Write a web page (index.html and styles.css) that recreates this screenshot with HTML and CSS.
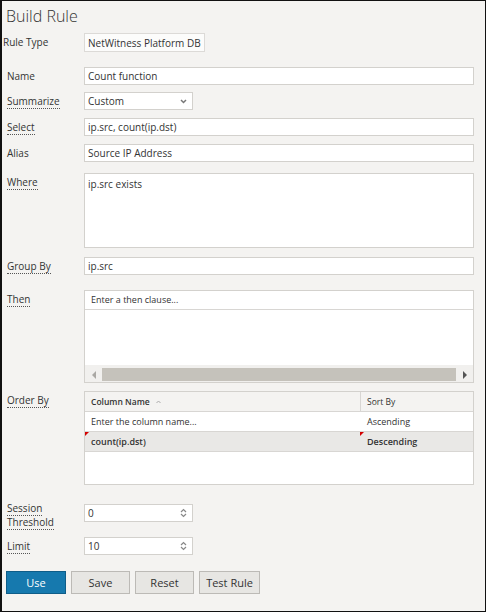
FILE: index.html
```html
<!DOCTYPE html>
<html lang="en">
<head>
  <meta charset="UTF-8">
  <title>Build Rule</title>
  <link rel="stylesheet" href="styles.css">
</head>
<body>
  <div class="panel">
    <h1 class="title">Build Rule</h1>

    <div class="row row-type">
      <span class="lbl lbl-type">Rule Type</span>
      <div class="field field-type">NetWitness Platform DB</div>
    </div>

    <div class="row gap-15">
      <span class="lbl">Name</span>
      <div class="field">Count function</div>
    </div>

    <div class="row gap-7">
      <span class="lbl"><span class="tip">Summarize</span></span>
      <div class="field field-short">
        <span>Custom</span>
        <svg class="chev" width="7" height="5" viewBox="0 0 7 5"><polyline points="1,1 3.5,3.5 6,1" fill="none" stroke="#777" stroke-width="1.5"/></svg>
      </div>
    </div>

    <div class="row">
      <span class="lbl"><span class="tip">Select</span></span>
      <div class="field">ip.src, count(ip.dst)</div>
    </div>

    <div class="row">
      <span class="lbl">Alias</span>
      <div class="field">Source IP Address</div>
    </div>

    <div class="row gap-11">
      <span class="lbl"><span class="tip">Where</span></span>
      <div class="field field-area">ip.src exists</div>
    </div>

    <div class="row gap-9">
      <span class="lbl"><span class="tip">Group By</span></span>
      <div class="field">ip.src</div>
    </div>

    <div class="row gap-15">
      <span class="lbl"><span class="tip">Then</span></span>
      <div class="then-box">
        <div class="then-head">Enter a then clause...</div>
        <div class="then-body"></div>
        <div class="hscroll">
          <div class="sbtn"><span class="arrow-left"></span></div>
          <div class="thumb"></div>
          <div class="sbtn"><span class="arrow-right"></span></div>
        </div>
      </div>
    </div>

    <div class="row">
      <span class="lbl"><span class="tip">Order By</span></span>
      <div class="grid">
        <div class="grid-head">
          <div class="gcol1 head-name">Column Name
            <svg class="caret" width="5" height="4" viewBox="0 0 5 4"><polyline points="0.5,3 2.5,1 4.5,3" fill="none" stroke="#aaa" stroke-width="1"/></svg>
          </div>
          <div class="gcol2 head-sort">Sort By</div>
        </div>
        <div class="grid-row">
          <div class="gcol1">Enter the column name...</div>
          <div class="gcol2">Ascending</div>
        </div>
        <div class="grid-row selected">
          <div class="gcol1 dirty">count(ip.dst)</div>
          <div class="gcol2 dirty">Descending</div>
        </div>
        <div class="grid-empty"></div>
      </div>
    </div>

    <div class="row gap-19">
      <span class="lbl lbl-two"><span class="tip">Session</span><br><span class="tip">Threshold</span></span>
      <div class="field field-short">
        <span>0</span>
        <svg class="spin" width="7" height="10" viewBox="0 0 7 10"><polyline points="1,4 3.5,1.5 6,4" fill="none" stroke="#888" stroke-width="1.2"/><polyline points="1,6 3.5,8.5 6,6" fill="none" stroke="#888" stroke-width="1.2"/></svg>
      </div>
    </div>

    <div class="row">
      <span class="lbl"><span class="tip">Limit</span></span>
      <div class="field field-short">
        <span>10</span>
        <svg class="spin" width="7" height="10" viewBox="0 0 7 10"><polyline points="1,4 3.5,1.5 6,4" fill="none" stroke="#888" stroke-width="1.2"/><polyline points="1,6 3.5,8.5 6,6" fill="none" stroke="#888" stroke-width="1.2"/></svg>
      </div>
    </div>

    <div class="actions">
      <button class="btn btn-use">Use</button>
      <button class="btn btn-save">Save</button>
      <button class="btn btn-reset">Reset</button>
      <button class="btn btn-test">Test Rule</button>
    </div>
  </div>
</body>
</html>
```

FILE: styles.css
```css
body {
  margin: 0;
  font-family: "Open Sans", "Segoe UI", sans-serif;
  color: #333;
}

.panel {
  box-sizing: border-box;
  width: 486px;
  height: 612px;
  border: 1px solid #111;
  border-left-width: 2px;
  background: #f4f3f1;
  padding: 5px 11px 0 5px;
  font-size: 10px;
}

.title {
  margin: 0 0 0 -1px;
  font-size: 16px;
  font-weight: 300;
  line-height: 20px;
  color: #333;
}

.row {
  display: flex;
  align-items: flex-start;
  margin-top: 8px;
}

.row-type { margin-top: 7px; }
.gap-7 { margin-top: 7px; }
.gap-9 { margin-top: 9px; }
.gap-11 { margin-top: 11px; }
.gap-15 { margin-top: 15px; }
.gap-19 { margin-top: 19px; }

.lbl {
  width: 77px;
  flex: none;
  line-height: 18px;
}

.lbl-type {
  margin-left: -4px;
  width: 81px;
  line-height: 19px;
}

.lbl-two {
  line-height: 14px;
  margin-top: -3px;
}

.tip {
  border-bottom: 1px dotted #555;
}

.field {
  flex: 1;
  box-sizing: border-box;
  height: 18px;
  border: 1px solid #d3d1cd;
  background: #fff;
  padding: 0 3px;
  line-height: 16px;
  display: flex;
  align-items: center;
  white-space: nowrap;
}

.field-type {
  flex: none;
  width: 121px;
  height: 19px;
  background: #fcfcfb;
  border-color: #dcdad7;
}

.field-short {
  flex: none;
  width: 109px;
  justify-content: space-between;
  padding-right: 5px;
}

.field-area {
  height: 75px;
  align-items: flex-start;
  padding-top: 2px;
}

/* then clause editor */
.then-box {
  flex: 1;
  border: 1px solid #d3d1cd;
  background: #fff;
}

.then-head {
  height: 18px;
  line-height: 18px;
  padding-left: 6px;
  font-size: 9px;
  border-bottom: 1px solid #d8d6d3;
}

.then-body {
  height: 55px;
}

.hscroll {
  height: 17px;
  background: #f1f0ee;
  display: flex;
}

.sbtn {
  width: 17px;
  flex: none;
  display: flex;
  align-items: center;
  justify-content: center;
  padding-top: 2px;
  box-sizing: border-box;
}

.arrow-left {
  border-right: 4px solid #aaa8a4;
  border-top: 4px solid transparent;
  border-bottom: 4px solid transparent;
}

.arrow-right {
  border-left: 4px solid #555;
  border-top: 4px solid transparent;
  border-bottom: 4px solid transparent;
}

.thumb {
  flex: 1;
  margin-top: 3px;
  height: 13px;
  background: #c5c2bb;
}

/* order by grid */
.grid {
  flex: 1;
  border: 1px solid #d3d1cd;
  background: #fff;
}

.grid-head {
  display: flex;
  height: 19px;
  line-height: 19px;
  background: #f4f3f1;
  border-bottom: 1px solid #d8d6d3;
  font-size: 8.5px;
}

.head-name {
  font-weight: 600;
}

.caret {
  margin-left: 4px;
  vertical-align: 1px;
}

.gcol1 {
  width: 275px;
  flex: none;
  box-sizing: border-box;
  padding-left: 6px;
  position: relative;
}

.gcol2 {
  flex: 1;
  padding-left: 6px;
  border-left: 1px solid transparent;
  position: relative;
}

.grid-head .gcol2 {
  border-left-color: #d8d6d3;
}

.grid-row {
  display: flex;
  height: 19px;
  line-height: 19px;
  border-bottom: 1px solid #d8d6d3;
  font-size: 9px;
}

.grid-row.selected {
  background: #e9e8e6;
  font-weight: 600;
}

.dirty::before {
  content: "";
  position: absolute;
  top: 0;
  left: 0;
  border-top: 4px solid #d40000;
  border-right: 4px solid transparent;
}

.gcol2.dirty::before {
  left: -1px;
}

.grid-empty {
  height: 32px;
}

/* buttons */
.actions {
  display: flex;
  gap: 5px;
  margin: 16px 0 0 -1px;
}

.btn {
  box-sizing: border-box;
  height: 23px;
  width: 59px;
  padding: 0;
  border: 1px solid #bcbab6;
  background: #e7e6e3;
  font-family: "Open Sans", "Segoe UI", sans-serif;
  font-size: 11px;
  color: #333;
}

.btn-use {
  width: 60px;
  background: #1679ae;
  border-color: #0f5d88;
  color: #fff;
}

.btn-test {
  width: 61px;
}
```
